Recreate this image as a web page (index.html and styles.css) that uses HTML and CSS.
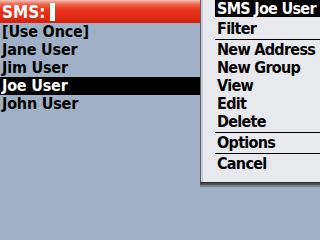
FILE: index.html
```html
<!DOCTYPE html>
<html lang="en">
<head>
  <meta charset="UTF-8">
  <title>SMS - Select Contact</title>
  <link rel="stylesheet" href="styles.css">
</head>
<body>
  <div class="screen">
    <div class="header">
      <span class="prompt">SMS:</span>
      <span class="cursor"></span>
    </div>

    <ul class="contacts">
      <li>[Use Once]</li>
      <li>Jane User</li>
      <li>Jim User</li>
      <li class="selected">Joe User</li>
      <li>John User</li>
    </ul>

    <div class="menu">
      <div class="menu-title">SMS Joe User</div>
      <ul class="menu-group first">
        <li>Filter</li>
      </ul>
      <ul class="menu-group">
        <li>New Address</li>
        <li>New Group</li>
        <li>View</li>
        <li>Edit</li>
        <li>Delete</li>
      </ul>
      <ul class="menu-group">
        <li>Options</li>
      </ul>
      <ul class="menu-group">
        <li>Cancel</li>
      </ul>
    </div>
  </div>
</body>
</html>
```

FILE: styles.css
```css
html, body {
  margin: 0;
  padding: 0;
}
body {
  width: 320px;
  height: 240px;
  overflow: hidden;
  background: #9fb0c7;
  font-family: "DejaVu Sans Condensed", "DejaVu Sans", sans-serif;
  font-weight: bold;
  font-size: 16px;
  color: #000;
  white-space: nowrap;
}
ul {
  list-style: none;
  margin: 0;
  padding: 0;
}
.screen {
  position: relative;
  width: 320px;
  height: 240px;
  overflow: hidden;
}
.header {
  height: 23px;
  display: flex;
  align-items: center;
  padding-left: 2px;
  background: linear-gradient(#f4c4bc 0px, #ee6a52 4px, #e8381e 9px, #e02a14 18px, #d4200c 23px);
  color: #fff;
  font-size: 17px;
}
.cursor {
  display: inline-block;
  width: 5px;
  height: 18px;
  margin-left: 5px;
  background: #fff;
}
.contacts li {
  height: 18px;
  line-height: 18px;
  padding-left: 2px;
  letter-spacing: -0.2px;
}
.contacts li.selected {
  background: #000;
  color: #fff;
}
.menu {
  position: absolute;
  top: 0;
  left: 200px;
  right: -40px;
  padding: 0 0 8px 14px;
  background: #e7e9ed;
  border-left: 1px solid #5a5e66;
  box-shadow: inset 2px 0 0 #c8ccd4, 0 1px 0 #2e2e2e, 0 3px 0 #4a4c50, 0 5px 0 #7c8088;
  letter-spacing: -0.7px;
}
.menu-title {
  height: 17px;
  line-height: 17px;
  padding-left: 2px;
  background: #000;
  color: #fff;
}
.menu-group {
  padding: 1px 0;
  border-bottom: 1px solid #000;
}
.menu-group.first {
  padding-top: 3px;
}
.menu-group:last-child {
  border-bottom: none;
}
.menu-group li {
  height: 18px;
  line-height: 18px;
  padding-left: 2px;
}
```
